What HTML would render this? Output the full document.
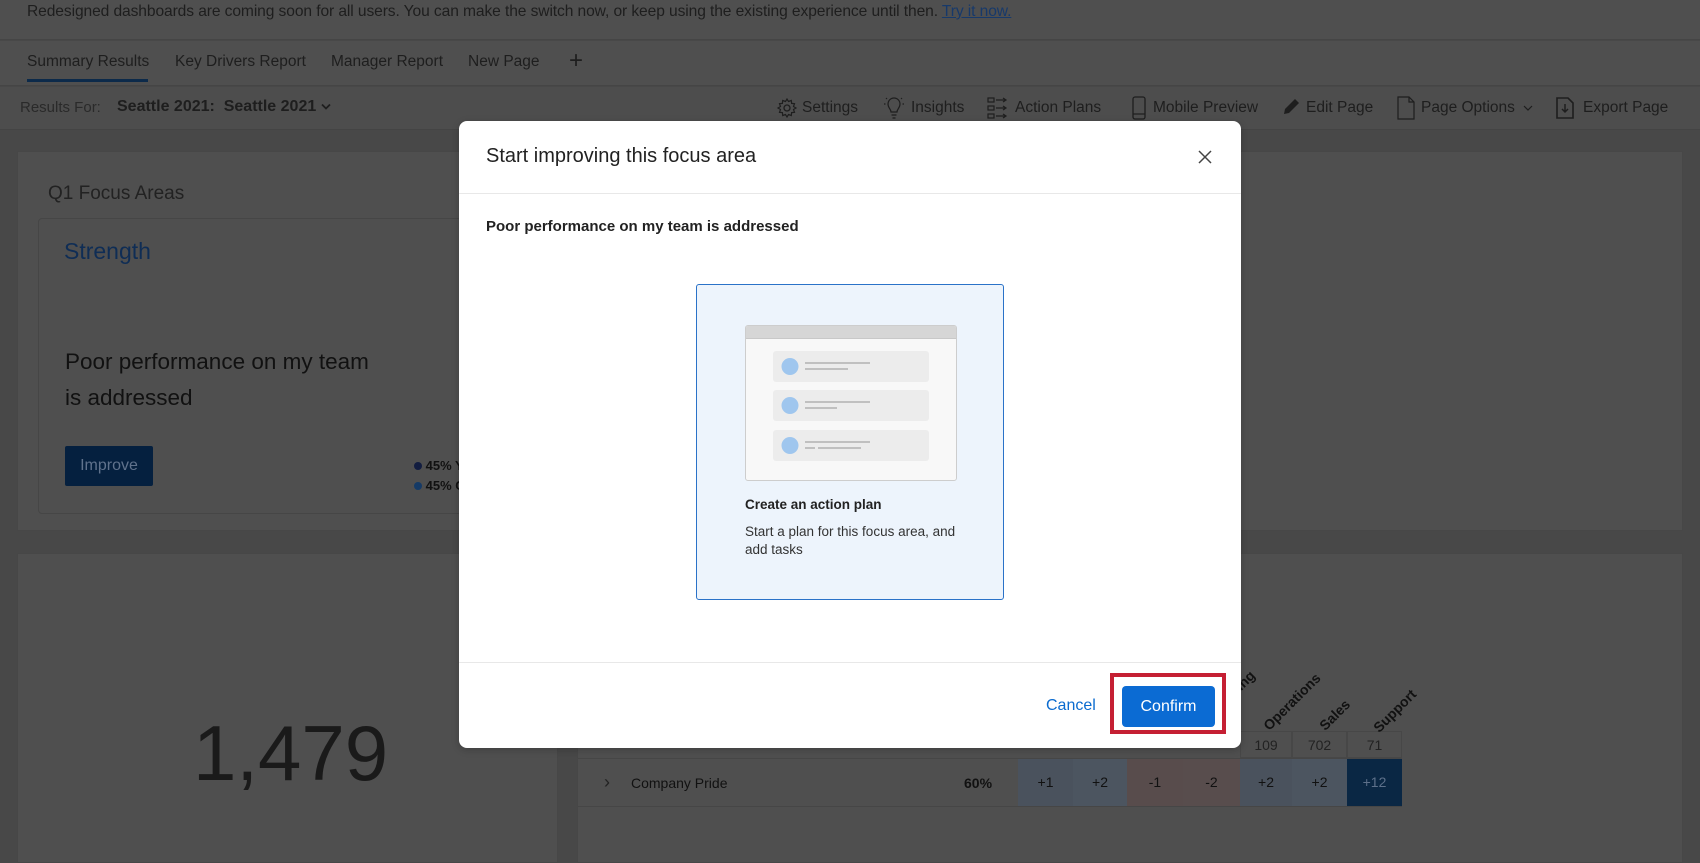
<!DOCTYPE html>
<html><head><meta charset="utf-8"><style>
*{box-sizing:border-box;margin:0;padding:0}
body{width:1700px;height:850px;overflow:hidden;background:#484848;font-family:"Liberation Sans",sans-serif;position:relative;color:#1c1c1c}
.a{position:absolute;white-space:nowrap}
.tb{font-size:15.5px;color:#1e1e1e}
svg{position:absolute;overflow:visible}
</style></head><body>
<div class="a" style="left:0;top:0;width:1700px;height:40px;background:#4f4f4f;border-bottom:1px solid #454545"></div>
<div class="a tb" style="left:27px;top:3px;font-size:15.6px;letter-spacing:-0.1px">Redesigned dashboards are coming soon for all users. You can make the switch now, or keep using the existing experience until then. <span style="color:#17396a;text-decoration:underline">Try it now.</span></div>
<div class="a" style="left:0;top:41px;width:1700px;height:45px;background:#4f4f4f;border-bottom:1px solid #454545"></div>
<div class="a tb" style="left:27px;top:53px">Summary Results</div>
<div class="a" style="left:27px;top:79px;width:121px;height:3px;background:#0c2a4a"></div>
<div class="a tb" style="left:175px;top:53px">Key Drivers Report</div>
<div class="a tb" style="left:331px;top:53px">Manager Report</div>
<div class="a tb" style="left:468px;top:53px">New Page</div>
<div class="a tb" style="left:569px;top:47px;font-size:24px">+</div>
<div class="a" style="left:0;top:87px;width:1700px;height:43px;background:#4d4d4d;border-bottom:1px solid #444"></div>
<div class="a tb" style="left:20px;top:99px;font-size:15px;color:#2a2a2a">Results For:</div>
<div class="a tb" style="left:117px;top:98px;font-weight:bold;font-size:16px">Seattle 2021:&nbsp; Seattle 2021</div>
<svg style="left:321px;top:103px" width="10" height="8"><path d="M1 1.5l4 4 4-4" stroke="#1e1e1e" stroke-width="1.8" fill="none"/></svg>
<svg style="left:777px;top:98px" width="20" height="20"><circle cx="10" cy="10" r="3" stroke="#1e1e1e" stroke-width="1.3" fill="none"/><path d="M10 1l1.5 2.5 2.8-1 .3 2.9 2.9.3-1 2.8L19 10l-2.5 1.5 1 2.8-2.9.3-.3 2.9-2.8-1L10 19l-1.5-2.5-2.8 1-.3-2.9-2.9-.3 1-2.8L1 10l2.5-1.5-1-2.8 2.9-.3.3-2.9 2.8 1z" stroke="#1e1e1e" stroke-width="1.2" fill="none"/></svg>
<div class="a tb" style="left:802px;top:99px">Settings</div>
<svg style="left:884px;top:97px" width="20" height="22"><path d="M7 15c0-3-3-4-3-8a6 6 0 0112 0c0 4-3 5-3 8zM7.5 18h5M8.5 21h3" stroke="#1e1e1e" stroke-width="1.2" fill="none"/><path d="M0 7h1.5M18.5 7h1.5M2 1l1 1M18 1l-1 1" stroke="#1e1e1e" stroke-width="1.2"/></svg>
<div class="a tb" style="left:911px;top:99px">Insights</div>
<svg style="left:987px;top:97px" width="24" height="24"><g stroke="#1e1e1e" stroke-width="1.2" fill="none"><rect x="1" y="1" width="6" height="4"/><rect x="1" y="9" width="6" height="4"/><rect x="1" y="17" width="6" height="4"/><path d="M9 3h10M16 1l3 2-3 2M9 11h10M16 9l3 2-3 2M9 19h10M16 17l3 2-3 2"/></g></svg>
<div class="a tb" style="left:1015px;top:99px">Action Plans</div>
<svg style="left:1132px;top:96px" width="14" height="24"><rect x="1" y="1" width="12" height="22" rx="2" stroke="#1e1e1e" stroke-width="1.3" fill="none"/><path d="M1 18h12" stroke="#1e1e1e" stroke-width="1.2"/></svg>
<div class="a tb" style="left:1153px;top:99px">Mobile Preview</div>
<svg style="left:1282px;top:98px" width="18" height="18"><path d="M2 16l1-5L13 1l4 4L7 15z" fill="#1e1e1e"/></svg>
<div class="a tb" style="left:1306px;top:99px">Edit Page</div>
<svg style="left:1397px;top:96px" width="18" height="24"><path d="M1 1h11l5 5v17H1z M12 1v5h5" stroke="#1e1e1e" stroke-width="1.2" fill="none"/></svg>
<div class="a tb" style="left:1421px;top:99px">Page Options</div>
<svg style="left:1523px;top:105px" width="10" height="7"><path d="M1 1l4 4 4-4" stroke="#1e1e1e" stroke-width="1.2" fill="none"/></svg>
<svg style="left:1556px;top:97px" width="18" height="22"><path d="M1 1h11l5 5v15H1z" stroke="#1e1e1e" stroke-width="1.6" fill="none"/><path d="M9 7v8M6 12l3 3 3-3" stroke="#1e1e1e" stroke-width="1.5" fill="none"/></svg>
<div class="a tb" style="left:1583px;top:99px">Export Page</div>

<div class="a" style="left:17px;top:151px;width:541px;height:380px;background:#4f4f4f;border:1px solid #474747"></div>
<div class="a" style="left:48px;top:183px;font-size:19px;color:#222">Q1 Focus Areas</div>
<div class="a" style="left:38px;top:218px;width:520px;height:296px;border:1px solid #464646;border-radius:4px"></div>
<div class="a" style="left:64px;top:238px;font-size:23px;color:#0f2d55">Strength</div>
<div class="a" style="left:65px;top:344px;font-size:22.5px;color:#111;line-height:36px">Poor performance on my team<br>is addressed</div>
<div class="a" style="left:65px;top:446px;width:88px;height:40px;background:#05203f;border-radius:2px;color:#60728c;font-size:16px;text-align:center;line-height:40px">Improve</div>
<div class="a" style="left:414px;top:456px;font-size:13px;font-weight:bold;color:#111;line-height:20px"><span style="display:inline-block;width:8px;height:8px;border-radius:50%;background:#121d40"></span> 45% Y<br><span style="display:inline-block;width:8px;height:8px;border-radius:50%;background:#153a66"></span> 45% C</div>
<div class="a" style="left:577px;top:151px;width:1106px;height:380px;background:#4f4f4f;border:1px solid #474747"></div>
<div class="a" style="left:17px;top:553px;width:541px;height:310px;background:#4f4f4f;border:1px solid #474747"></div>
<div class="a" style="left:193px;top:708px;font-size:78px;color:#1a1a1a;font-weight:300">1,479</div>
<div class="a" style="left:577px;top:553px;width:1106px;height:310px;background:#4f4f4f;border:1px solid #474747"></div>
<div class="a" style="left:578px;top:731px;width:824px;height:1px;background:#555"></div>
<div class="a" style="left:578px;top:758px;width:824px;height:1px;background:#464646"></div>
<div class="a" style="left:578px;top:806px;width:824px;height:1px;background:#464646"></div>
<div class="a" style="left:1240px;top:731px;width:52px;height:27px;border:1px solid #474747;text-align:center;font-size:14px;line-height:27px;color:#222">109</div>
<div class="a" style="left:1292px;top:731px;width:55px;height:27px;border:1px solid #474747;text-align:center;font-size:14px;line-height:27px;color:#222">702</div>
<div class="a" style="left:1347px;top:731px;width:55px;height:27px;border:1px solid #474747;text-align:center;font-size:14px;line-height:27px;color:#222">71</div>
<div class="a" style="left:604px;top:772px;font-size:18px;color:#222">›</div>
<div class="a" style="left:631px;top:775px;font-size:14px;color:#111">Company Pride</div>
<div class="a" style="left:964px;top:775px;font-size:14px;color:#111;font-weight:bold">60%</div>
<div class="a" style="left:1018px;top:759px;width:55px;height:47px;background:#4a525d;text-align:center;line-height:47px;font-size:14px;color:#111">+1</div>
<div class="a" style="left:1073px;top:759px;width:54px;height:47px;background:#4c5560;text-align:center;line-height:47px;font-size:14px;color:#111">+2</div>
<div class="a" style="left:1127px;top:759px;width:56px;height:47px;background:#584c4c;text-align:center;line-height:47px;font-size:14px;color:#111">-1</div>
<div class="a" style="left:1183px;top:759px;width:57px;height:47px;background:#584d4d;text-align:center;line-height:47px;font-size:14px;color:#111">-2</div>
<div class="a" style="left:1240px;top:759px;width:52px;height:47px;background:#4a525d;text-align:center;line-height:47px;font-size:14px;color:#111">+2</div>
<div class="a" style="left:1292px;top:759px;width:55px;height:47px;background:#4c5560;text-align:center;line-height:47px;font-size:14px;color:#111">+2</div>
<div class="a" style="left:1347px;top:759px;width:55px;height:47px;background:#0a2744;text-align:center;line-height:47px;font-size:14px;color:#5d708a">+12</div>
<div class="a" style="left:1200px;top:714px;font-size:14px;font-weight:bold;color:#111;transform:rotate(-45deg);transform-origin:0 0">Marketing</div>
<div class="a" style="left:1260px;top:722px;font-size:14px;font-weight:bold;color:#111;transform:rotate(-45deg);transform-origin:0 0">Operations</div>
<div class="a" style="left:1316px;top:722px;font-size:14px;font-weight:bold;color:#111;transform:rotate(-45deg);transform-origin:0 0">Sales</div>
<div class="a" style="left:1370px;top:724px;font-size:14px;font-weight:bold;color:#111;transform:rotate(-45deg);transform-origin:0 0">Support</div>

<div class="a" style="left:459px;top:121px;width:782px;height:627px;background:#fff;border-radius:8px;box-shadow:0 2px 8px rgba(0,0,0,.2)"></div>
<div class="a" style="left:486px;top:145px;font-size:20px;color:#222">Start improving this focus area</div>
<svg style="left:1198px;top:150px" width="14" height="14"><path d="M1 1l12 12M13 1L1 13" stroke="#444" stroke-width="1.5"/></svg>
<div class="a" style="left:459px;top:193px;width:782px;height:1px;background:#e8e8e8"></div>
<div class="a" style="left:486px;top:218px;font-size:15px;font-weight:bold;color:#222">Poor performance on my team is addressed</div>
<div class="a" style="left:696px;top:284px;width:308px;height:316px;background:#edf4fc;border:1px solid #2a72c8;border-radius:3px"></div>
<div class="a" style="left:745px;top:325px;width:212px;height:156px;background:#f8f8f8;border:1px solid #cdcdcd;border-radius:3px;overflow:hidden"><div style="height:13px;background:#d6d6d6;border-bottom:1px solid #c8c8c8"></div></div>
<svg style="left:773px;top:351px" width="160" height="112">
<g><rect x="0" y="0" width="156" height="31" rx="3" fill="#ececec"/><circle cx="17" cy="15.5" r="8.5" fill="#9fc6ee"/><rect x="32" y="11" width="65" height="2" fill="#c0c0c0"/><rect x="32" y="17" width="43" height="2" fill="#c0c0c0"/></g>
<g transform="translate(0,39)"><rect x="0" y="0" width="156" height="31" rx="3" fill="#ececec"/><circle cx="17" cy="15.5" r="8.5" fill="#9fc6ee"/><rect x="32" y="11" width="65" height="2" fill="#c0c0c0"/><rect x="32" y="17" width="32" height="2" fill="#c0c0c0"/></g>
<g transform="translate(0,79)"><rect x="0" y="0" width="156" height="31" rx="3" fill="#ececec"/><circle cx="17" cy="15.5" r="8.5" fill="#9fc6ee"/><rect x="32" y="11" width="65" height="2" fill="#c0c0c0"/><rect x="32" y="17" width="10" height="2" fill="#c0c0c0"/><rect x="45" y="17" width="43" height="2" fill="#c0c0c0"/></g>
</svg>
<div class="a" style="left:745px;top:497px;font-size:13.5px;font-weight:bold;color:#222">Create an action plan</div>
<div class="a" style="left:745px;top:523px;font-size:13.5px;color:#333;line-height:18px">Start a plan for this focus area, and<br>add tasks</div>
<div class="a" style="left:459px;top:662px;width:782px;height:1px;background:#e8e8e8"></div>
<div class="a" style="left:1046px;top:697px;font-size:16px;color:#0b6bcf">Cancel</div>
<div class="a" style="left:1110px;top:673px;width:116px;height:61px;border:4px solid #c51f33"></div>
<div class="a" style="left:1122px;top:686px;width:93px;height:41px;background:#0b6bd3;border-radius:4px;color:#fff;font-size:16px;text-align:center;line-height:41px">Confirm</div>
</body></html>
